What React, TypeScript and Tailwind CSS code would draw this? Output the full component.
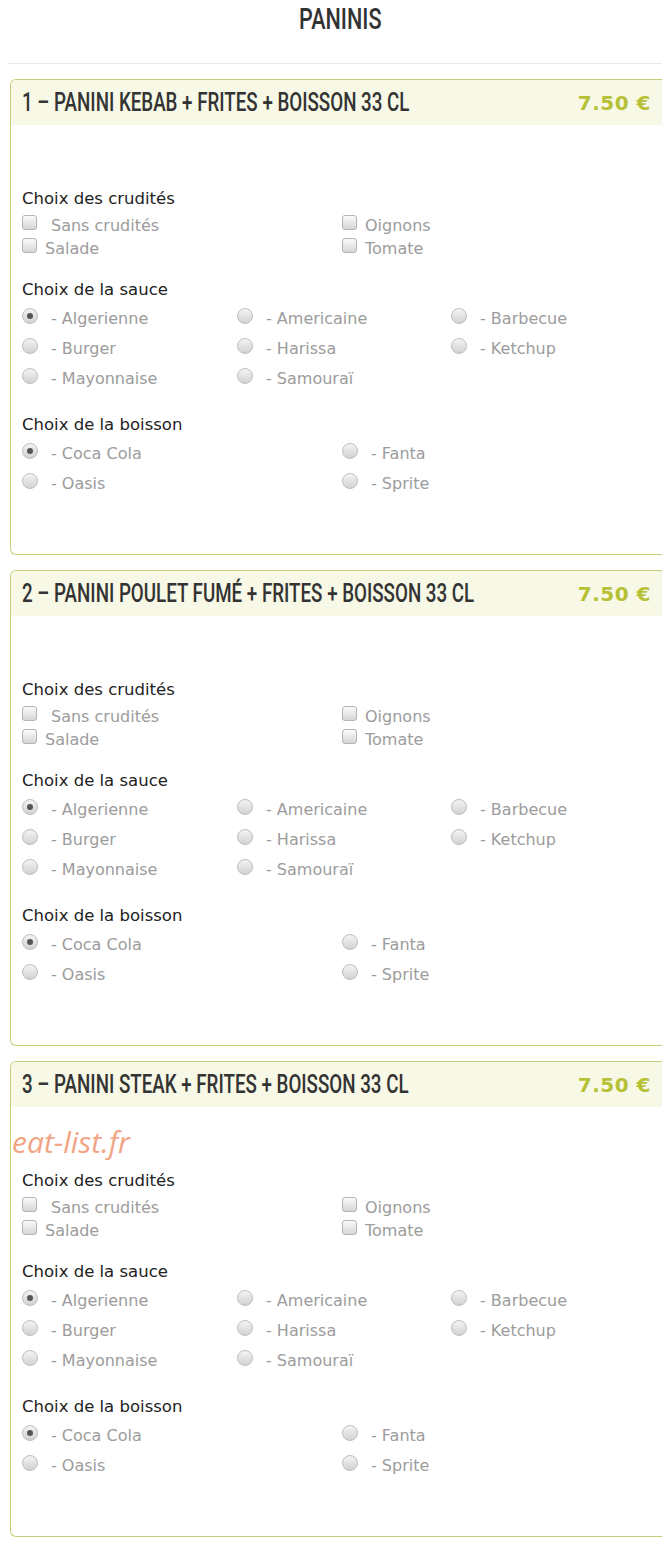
import React from "react";

const body = { fontFamily: '"DejaVu Sans", Verdana, sans-serif' };
const cond = { fontFamily: 'Roboto, "Liberation Sans", sans-serif' };

function Checkbox() {
  return (
    <span className="inline-block w-[15px] h-[15px] rounded-[3px] border border-[#b3b3b3] bg-gradient-to-b from-[#fbfbfb] to-[#d6d6d6] shrink-0 -mt-[6px]" />
  );
}

function Radio({ checked }: { checked?: boolean }) {
  return (
    <span className="relative inline-flex items-center justify-center w-[16px] h-[16px] rounded-full border border-[#bdbdbd] bg-gradient-to-b from-[#f4f4f4] to-[#d2d2d2] shrink-0 -mt-[6px]">
      {checked && <span className="block w-[6px] h-[6px] rounded-full bg-[#555]" />}
    </span>
  );
}

function Heading({ children }: { children: React.ReactNode }) {
  return (
    <div className="h-[20px] leading-[20px] text-[16.5px] text-[#222]" style={body}>
      {children}
    </div>
  );
}

function CheckRow({ label, extra }: { label: string; extra?: boolean }) {
  return (
    <div className="h-[23px] flex items-center gap-[8px]">
      <Checkbox />
      <span className={`text-[16px] text-[#9c9c9c] leading-[20px] ${extra ? "ml-[6px]" : ""}`} style={body}>
        {label}
      </span>
    </div>
  );
}

function RadioRow({ label, checked }: { label: string; checked?: boolean }) {
  return (
    <div className="h-[30px] flex items-center gap-[13px]">
      <Radio checked={checked} />
      <span className="text-[16px] text-[#9c9c9c] leading-[20px]" style={body}>
        - {label}
      </span>
    </div>
  );
}

function Card({ title, watermark }: { title: string; watermark?: boolean }) {
  return (
    <div className="relative ml-[10px] border border-r-0 border-[#c8ce78] rounded-l-[6px]">
      <div className="h-[45px] bg-[#f7f8e6] rounded-tl-[5px] flex items-center pl-[11px] pr-[11px]">
        <div className="flex-1 w-0 whitespace-nowrap pt-[1px]">
          <span
            className="inline-block origin-left scale-x-[0.75] whitespace-nowrap text-[25px] font-medium text-[#333] leading-none"
            style={cond}
          >
            {title}
          </span>
        </div>
        <span
          className="shrink-0 whitespace-nowrap text-[20px] font-bold text-[#b6c136] tracking-[0.5px] leading-none"
          style={body}
        >
          7.50 €
        </span>
      </div>
      {watermark && (
        <div
          className="absolute left-[1px] top-[60px] text-[30px] italic text-[#f1a584] leading-[40px]"
          style={{ fontFamily: '"Open Sans", sans-serif' }}
        >
          eat-list.fr
        </div>
      )}
      <div className="pt-[64px] pb-[55px] pl-[11px]">
        <Heading>Choix des crudités</Heading>
        <div className="mt-[5px] grid grid-cols-[320px_320px]">
          <CheckRow label="Sans crudités" extra />
          <CheckRow label="Oignons" />
          <CheckRow label="Salade" />
          <CheckRow label="Tomate" />
        </div>
        <div className="mt-[20px]">
          <Heading>Choix de la sauce</Heading>
        </div>
        <div className="mt-[4px] grid grid-cols-[215px_214px_214px]">
          <RadioRow label="Algerienne" checked />
          <RadioRow label="Americaine" />
          <RadioRow label="Barbecue" />
          <RadioRow label="Burger" />
          <RadioRow label="Harissa" />
          <RadioRow label="Ketchup" />
          <RadioRow label="Mayonnaise" />
          <RadioRow label="Samouraï" />
        </div>
        <div className="mt-[21px]">
          <Heading>Choix de la boisson</Heading>
        </div>
        <div className="mt-[4px] grid grid-cols-[320px_320px]">
          <RadioRow label="Coca Cola" checked />
          <RadioRow label="Fanta" />
          <RadioRow label="Oasis" />
          <RadioRow label="Sprite" />
        </div>
      </div>
    </div>
  );
}

export default function App() {
  return (
    <div className="w-[662px] min-h-[1541px] bg-white overflow-hidden">
      <div className="h-[63px] pl-[18px] text-center">
        <span
          className="inline-block scale-x-[0.72] text-[30px] font-medium text-[#333] leading-[38px]"
          style={cond}
        >
          PANINIS
        </span>
      </div>
      <div className="ml-[7px] h-px bg-[#e9e9e9]" />
      <div className="mt-[15px] flex flex-col gap-[15px]">
        <Card title="1 – PANINI KEBAB + FRITES + BOISSON 33 CL" />
        <Card title="2 – PANINI POULET FUMÉ + FRITES + BOISSON 33 CL" />
        <Card title="3 – PANINI STEAK + FRITES + BOISSON 33 CL" watermark />
      </div>
    </div>
  );
}
